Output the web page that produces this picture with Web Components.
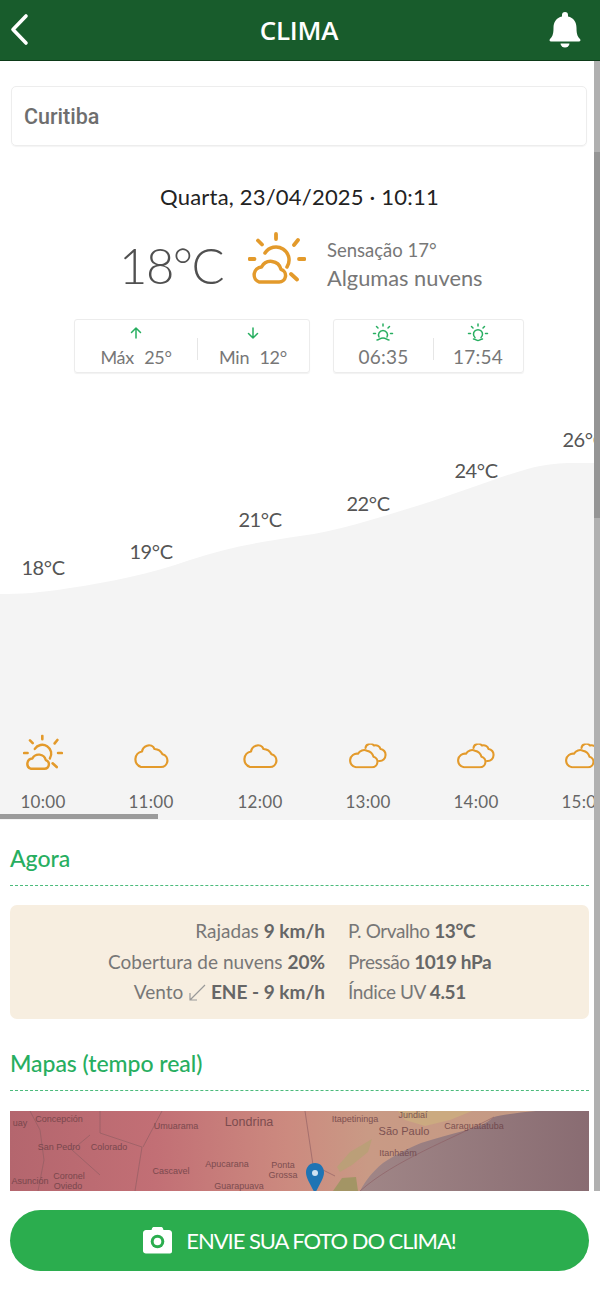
<!DOCTYPE html>
<html lang="pt"><head><meta charset="utf-8"><title>Clima</title>
<style>
html,body{margin:0;padding:0;background:#fff;height:1299px;overflow:hidden}
body{font-family:Lato,"Open Sans",sans-serif;color:#666}
</style></head>
<body>
<clima-app></clima-app>
<script>
const S=(tag,tpl)=>{customElements.define(tag,class extends HTMLElement{constructor(){super();this.attachShadow({mode:'open'}).innerHTML=typeof tpl==='function'?tpl(this):tpl;}})};
const sunCloud=`<svg viewBox="0 0 58 54" width="100%" height="100%" fill="none" stroke="#e39a2b" stroke-linecap="round" stroke-linejoin="round" style="display:block"><path stroke-width="3.8" d="M28 2v5M10 8.500l4 4M50 8l-4 5M1.500 27h5M51 27h5.500M43 42l6 5.500"/><path stroke-width="3.500" d="M17 21a13 13 0 1 1 22 14"/><path stroke-width="3.500" d="M11 50H31a6.500 6.500 0 0 0 2-12.700a10.500 10.500 0 0 0-19.500-2.300a7.800 7.800 0 0 0-2.500 15z"/></svg>`;
const cloud=`<svg viewBox="0 0 36 25" width="100%" height="100%" fill="none" stroke="#e39a2b" stroke-width="2.200" stroke-linejoin="round" style="display:block"><path d="M8 23.500h20a6.500 6.500 0 0 0 1.500-12.800a9.500 9.500 0 0 0-8-5.200a6 6 0 0 0-7.500-3.300c-3 1-4.500 3-5 5.800a8 8 0 0 0-1 15.500z"/></svg>`;
const clouds=`<svg viewBox="0 0 38 25" width="100%" height="100%" fill="none" stroke="#e39a2b" stroke-width="2.100" stroke-linejoin="round" stroke-linecap="round" style="display:block"><path d="M7 23.800h16a5.400 5.400 0 0 0 1.500-10.600a8.500 8.500 0 0 0-6.500-6a7 7 0 0 0-9 3a6.800 6.800 0 0 0-2 13.600z"/><path d="M16.500 4.500a4.800 4.800 0 0 1 8.500-2.500a5 5 0 0 1 6.500 3.500a5.500 5.500 0 0 1 5 6a5.800 5.800 0 0 1-6.500 6"/></svg>`;

S('app-header',`<style>
:host{display:flex;align-items:center;justify-content:space-between;height:60px;background:#185c2c;border-bottom:1px solid #0c3a18;color:#fff;padding:0 19px 0 10px;position:relative}
.t{position:absolute;left:0;right:0;text-align:center;font:600 26px/60px "Open Sans",Lato,sans-serif;letter-spacing:-.2px;padding-right:2px}
svg{display:block;position:relative}
</style>
<svg width="20" height="34" viewBox="0 0 20 34" fill="none" stroke="#fff" stroke-width="3.600" stroke-linecap="round" stroke-linejoin="round"><path d="M16 3L3 16.500 16 30"/></svg>
<span class="t">CLIMA</span>
<svg width="32" height="36" viewBox="0 0 32 36" fill="#fff"><path d="M16 0a3 3 0 0 1 3 3v1.500c5.500 1.200 8.500 5.500 8.500 11.500 0 7 1.600 9 3.500 11 .8 1 .5 2.500-1 2.500H2c-1.500 0-1.800-1.500-1-2.500 1.900-2 3.500-4 3.500-11 0-6 3-10.300 8.500-11.500V3a3 3 0 0 1 3-3z"/><path d="M11.500 31.500h9a4.500 4 0 0 1-9 0z"/></svg>`);

S('city-field',`<style>
:host{display:flex;align-items:center;height:60px;margin:25px 13px 0 11px;padding:0 12px;box-sizing:border-box;border:1px solid #ededed;border-radius:5px;font:500 21.500px Roboto,sans-serif;color:#6e6e6e;box-shadow:0 1px 1px #f4f4f4}
</style><slot></slot>`);

S('now-summary',`<style>
:host{display:block;color:#666}
.date{margin-top:36px;text-align:center;font-size:22px;line-height:30px;color:#222;letter-spacing:.2px;padding-right:1px}
.row{display:flex;align-items:center;height:74px;margin-top:16px;padding-left:119px}
.temp{font-size:49px;line-height:74px;width:129px;font-weight:300;color:#505050;letter-spacing:-1.500px}
.ic{width:58px;height:54px;margin-right:21px;margin-top:-13px}
.s{font-size:18.500px;line-height:27px;color:#777;margin-top:-3px}
.s div+div{font-size:21.800px}
.stats{display:flex;gap:23px;margin:17px 0 0 74px}
</style>
<div class="date">Quarta, 23/04/2025 · 10:11</div>
<div class="row"><div class="temp">18°C</div><div class="ic">${sunCloud}</div><div class="s"><div>Sensação 17°</div><div>Algumas nuvens</div></div></div>
<div class="stats"><stat-box style="width:236px"><stat-cell icon="up" style="width:123px;font-size:18px;letter-spacing:-.3px;word-spacing:6px">Máx 25°</stat-cell><stat-cell sep icon="down" style="width:113px;font-size:18px;letter-spacing:-.3px;word-spacing:6px">Min 12°</stat-cell></stat-box><stat-box style="width:191px"><stat-cell icon="rise" style="width:100px">06:35</stat-cell><stat-cell sep icon="set" style="width:91px">17:54</stat-cell></stat-box></div>`);

S('stat-box',`<style>
:host{display:flex;height:54px;box-sizing:border-box;border:1px solid #ececec;border-radius:3px;box-shadow:0 1px 1px #f2f2f2;align-items:stretch}
</style><slot></slot>`);

const statIcons={
up:`<svg width="14" height="14" viewBox="0 0 14 14" fill="none" stroke="#27ae60" stroke-width="1.500" stroke-linecap="round" stroke-linejoin="round"><path d="M7 12V2M2.500 6.500L7 2l4.500 4.500"/></svg>`,
down:`<svg width="14" height="14" viewBox="0 0 14 14" fill="none" stroke="#27ae60" stroke-width="1.500" stroke-linecap="round" stroke-linejoin="round"><path d="M7 2v10M2.500 7.500L7 12l4.500-4.500"/></svg>`,
rise:`<svg width="22" height="20" viewBox="0 0 22 20" fill="none" stroke="#27ae60" stroke-width="1.500" stroke-linecap="round" stroke-linejoin="round"><path d="M11 1v2M4.500 3.500L6 5M17.500 3.500L16 5M1.500 10.500h2M18.500 10.500h2M7 14a4.500 4.500 0 1 1 8 0M5 17c2 0 3-2 6-2s4 2 6 2"/></svg>`,
set:`<svg width="22" height="20" viewBox="0 0 22 20" fill="none" stroke="#27ae60" stroke-width="1.500" stroke-linecap="round" stroke-linejoin="round"><path d="M11 1v2M4.500 3.500L6 5M17.500 3.500L16 5M1.500 10.500h2M18.500 10.500h2M8 14.500a4.500 4.500 0 1 1 6 0M6.500 16c2 0 3 1.500 4.500 1.500s2.500-1.500 4.500-1.500"/></svg>`};
S('stat-cell',el=>`<style>
:host{display:flex;flex-direction:column;align-items:center;font-size:19px;letter-spacing:.2px;color:#777;padding-top:3px;box-sizing:border-box;position:relative}
:host([sep])::before{content:"";position:absolute;left:0;top:18px;height:22px;width:1px;background:#e6e6e6}
.i{height:20px;display:flex;align-items:center;justify-content:center}
svg{display:block}
.l{line-height:24px;margin-top:2px}
</style><div class="i">${statIcons[el.getAttribute('icon')]}</div><div class="l"><slot></slot></div>`);

const hours=[[43,'18°C',567,sunCloud,'10:00',40,37],[151,'19°C',551,cloud,'11:00',36,25],[260,'21°C',519,cloud,'12:00',36,25],[368,'22°C',503,clouds,'13:00',38,25],[476,'24°C',470,clouds,'14:00',38,25],[584,'26°C',439,clouds,'15:00',38,25]];
S('hour-chart',`<style>
:host{display:block;position:relative;height:429px;margin-top:18px;overflow:hidden}
svg.c{position:absolute;left:0;top:0;display:block}
.lbl{position:absolute;transform:translate(-50%,-50%);font-size:20px;color:#555;white-space:nowrap;letter-spacing:-.4px}
.ic{position:absolute;transform:translate(-50%,-50%)}
.h{position:absolute;transform:translate(-50%,-50%);font-size:17px;color:#666;letter-spacing:.3px}
.bar{position:absolute;left:0;bottom:1px;width:158px;height:5px;background:#9b9b9b}
</style>
<svg class="c" width="600" height="429" viewBox="0 391 600 429"><path fill="#f4f4f4" d="M0 594C20 594 40 593 70 588C110 582 150 574 190 560C225 548 260 542 300 536C340 531 380 517 420 505C460 493 510 472 540 466C560 462 575 463 600 463V821H0Z"/></svg>
${hours.map(h=>`<div class="lbl" style="left:${h[0]}px;top:${h[2]-391}px">${h[1]}</div><div class="ic" style="left:${h[0]}px;top:${(h[3]===sunCloud?753:756)-391}px;width:${h[5]}px;height:${h[6]}px">${h[3]}</div><div class="h" style="left:${h[0]}px;top:${801-391}px">${h[4]}</div>`).join('')}
<div class="bar"></div>`);

S('section-title',`<style>
:host{display:block;margin:0 11px 0 10px;border-bottom:1px dashed #4cbb7c;font-size:23px;font-weight:500;color:#27ae60;line-height:30px;padding-bottom:12px;letter-spacing:-.05px}
</style><slot></slot>`);

S('now-details',`<style>
:host{display:grid;grid-template-columns:315px 1fr;column-gap:23px;margin:19px 11px 0 10px;height:114px;box-sizing:border-box;background:#f7eee0;border-radius:7px;font-size:19px;line-height:30.500px;color:#777;align-content:center}
.a{text-align:right}
.b{letter-spacing:-.4px}
b{color:#666;font-weight:700}
svg{vertical-align:-3px}
</style>
<div class="a">Rajadas <b>9 km/h</b></div><div class="b">P. Orvalho <b>13°C</b></div>
<div class="a">Cobertura de nuvens <b>20%</b></div><div class="b">Pressão <b>1019 hPa</b></div>
<div class="a">Vento <svg width="18" height="18" viewBox="0 0 18 18" fill="none" stroke="#999" stroke-width="1.200"><path d="M17 1L2 16M2 9v7h7"/></svg> <b>ENE - 9 km/h</b></div><div class="b">Índice UV <b>4.51</b></div>`);

const lab=(x,y,t,s)=>`<text x="${x}" y="${y}" text-anchor="middle"${s?` style="font-size:${s}px"`:''}>${t}</text>`;
S('map-preview',`<style>
:host{display:block;margin:20px 11px 0 10px;height:80px;overflow:hidden;position:relative;background:linear-gradient(90deg,#b4666e 0,#c26f75 25%,#cc8a7f 48%,#c99a85 62%,#c29a84 100%)}
svg{display:block;position:absolute;inset:0}
text{font:9px "Liberation Sans",sans-serif;fill:#6a3f45;opacity:.8}
</style>
<svg width="579" height="80" viewBox="10 1111 579 80">
<defs><linearGradient id="sea" x1="0" x2="1"><stop offset="0" stop-color="#a08687"/><stop offset="1" stop-color="#896c72"/></linearGradient></defs>
<path fill="url(#sea)" d="M589 1111H536C515 1113 500 1115 494 1117C485 1124 476 1128 467 1130C450 1134 435 1139 421 1143C405 1150 393 1156 383 1163C372 1172 366 1180 360 1191H589Z"/>
<path fill="#bb9f78" d="M337 1167L350 1152 372 1139 368 1152 352 1165 340 1172Z"/>
<path fill="#cbaa80" d="M398 1111H472L450 1120 425 1126 405 1120Z"/>
<path fill="#a39565" d="M333 1191L342 1178 356 1177 358 1191Z"/>
<g fill="none" stroke="#8c5b60" stroke-width="1" opacity=".6"><path d="M30 1111L40 1130 44 1160 38 1191M100 1111L100 1133 142 1147 135 1191M162 1111L143 1147M305 1111L313 1165 335 1176M90 1135L72 1150 100 1175M360 1191C395 1160 450 1140 494 1117"/></g>
${lab(59,1122,'Concepción')}${lab(20,1126,'uay')}${lab(176,1129,'Umuarama')}${lab(249,1126,'Londrina',12.5)}${lab(355,1122,'Itapetininga')}${lab(404,1135,'São Paulo',11)}${lab(413,1118,'Jundiaí')}${lab(474,1129,'Caraguatatuba')}${lab(59,1150,'San Pedro')}${lab(109,1150,'Colorado')}${lab(398,1156,'Itanhaém')}${lab(171,1174,'Cascavel')}${lab(227,1167,'Apucarana')}${lab(283,1168,'Ponta')}${lab(283,1178,'Grossa')}${lab(30,1184,'Asunción')}${lab(69,1179,'Coronel')}${lab(68,1189,'Oviedo')}${lab(239,1189,'Guarapuava')}
</svg>
<svg viewBox="0 0 579 80" width="579" height="80"><path fill="#1f74b4" d="M305 52c-5.500 0-9 4.200-9 9.500 0 5.500 5 13 9 21 4-8 9-15.500 9-21 0-5.300-3.500-9.500-9-9.500z"/><circle cx="305" cy="62" r="3" fill="#cfe2f2"/></svg>`);

S('photo-button',`<style>
:host{display:flex;align-items:center;justify-content:center;gap:14px;height:61px;border-radius:31px;background:#2bad4e;color:#fff;font-size:22px;letter-spacing:-1.050px;margin:0 11px 0 10px}
svg{display:block}
</style><svg width="29" height="27" viewBox="0 0 29 27"><path fill="#fff" d="M9 1.500c.3-1 1-1.500 2-1.500h7c1 0 1.700.5 2 1.500l.5 1.500h5.500c1.600 0 3 1.400 3 3v18.500c0 1.200-1 2-2 2H3c-1.600 0-3-1-3-2.500V6c0-1.600 1.400-3 3-3h5.500z"/><circle cx="14.500" cy="14.500" r="6.800" fill="#2bad4e"/><circle cx="14.500" cy="14.500" r="3.800" fill="#fff"/></svg><slot></slot>`);

S('clima-app',`<style>
:host{display:block;height:1299px;position:relative;overflow:hidden;background:#fff}
.scroll{height:1130px;overflow:hidden;position:relative}
.track{position:absolute;right:0;top:0;bottom:0;width:6px;background:#b0b0b0}
.track:after{content:"";position:absolute;left:0;right:0;top:91px;height:366px;background:#959595}
section-title.a{margin-top:23px}section-title.m{margin-top:29px}
.foot{padding-top:19px}
</style>
<app-header></app-header>
<div class="scroll">
<city-field>Curitiba</city-field>
<now-summary></now-summary>
<hour-chart></hour-chart>
<section-title class="a">Agora</section-title>
<now-details></now-details>
<section-title class="m">Mapas (tempo real)</section-title>
<map-preview></map-preview>
<div class="track"></div>
</div>
<div class="foot"><photo-button>ENVIE SUA FOTO DO CLIMA!</photo-button></div>`);
</script>
</body></html>
